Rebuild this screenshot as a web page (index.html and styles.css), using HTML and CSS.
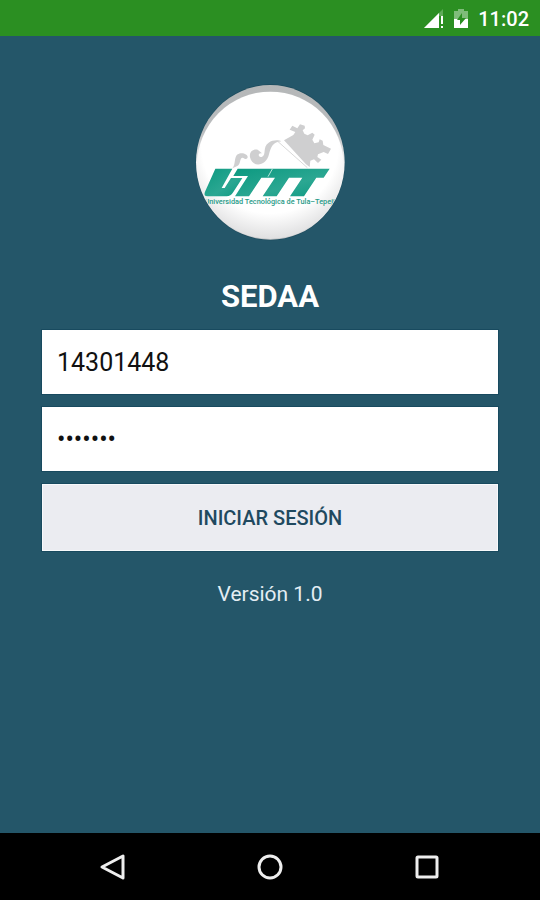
FILE: index.html
```html
<!DOCTYPE html>
<html lang="es">
<head>
<meta charset="utf-8">
<meta name="viewport" content="width=device-width, initial-scale=1">
<title>SEDAA</title>
<link rel="stylesheet" href="styles.css">
</head>
<body>
<header class="status">
  <svg class="status-icon" width="20" height="20" viewBox="0 0 20 20" aria-hidden="true">
    <path d="M0 19 19 0V7H15V19Z" fill="#5fab59"/>
    <path d="M0 19 15 4V19Z" fill="#fff"/>
    <path d="M17 7h2v8h-2zM17 17h2v2h-2z" fill="#fff"/>
  </svg>
  <svg class="status-icon" width="14" height="20" viewBox="0 0 14 20" aria-hidden="true">
    <path d="M4 0h6v2h4v8H0V2h4Z" fill="#7fbc7a"/>
    <path d="M0 10h14v9H0Z" fill="#fff"/>
    <path d="M8 4 3 11h3v5l6-7H8Z" fill="#2b8f22"/>
  </svg>
  <time class="clock">11:02</time>
</header>
<main class="login">
  <svg class="logo" width="150" height="157" viewBox="45 27 450 471" role="img" aria-label="UTTT">
    <defs>
      <linearGradient id="rim" x1="0" y1="0" x2="0" y2="1">
        <stop offset="0" stop-color="#b5b7b8"/>
        <stop offset=".3" stop-color="#b9bcbe"/>
        <stop offset=".5" stop-color="#f4f4f4"/>
        <stop offset=".85" stop-color="#eee"/>
        <stop offset="1" stop-color="#c4c6c8"/>
      </linearGradient>
      <radialGradient id="face" gradientUnits="userSpaceOnUse" cx="270" cy="210" r="285">
        <stop offset=".72" stop-color="#fff"/>
        <stop offset="1" stop-color="#dededf"/>
      </radialGradient>
      <linearGradient id="green" x1="0" y1="0" x2="1" y2="1">
        <stop offset="0" stop-color="#0c9980"/>
        <stop offset=".6" stop-color="#2ba792"/>
        <stop offset="1" stop-color="#0e9a82"/>
      </linearGradient>
      <clipPath id="disc"><ellipse cx="271" cy="262" rx="221" ry="230"/></clipPath>
    </defs>
    <ellipse cx="271" cy="262" rx="224" ry="234" fill="#1c4a5c"/>
    <ellipse cx="271" cy="262" rx="223" ry="232" fill="url(#rim)"/>
    <g clip-path="url(#disc)">
      <ellipse cx="271" cy="271" rx="220" ry="221" fill="url(#face)"/>
      <g fill="#cfcfd0">
        <path d="M312 196 340 180 346 171 329 164 337 152 352 160 360 148 374 152 375 160 368 166 373 176 383 181 397 173 404 179 397 194 403 205 416 202 419 193 428 197 430 210 453 221 444 237 431 231 414 238 412 246 424 254 414 264 402 253 391 257 389 276 378 268Z"/>
        <path d="M157 280C168 269 161 247 173 238C184 230 204 237 203 247C201 256 192 250 188 248C179 247 182 269 172 273Z"/>
        <path d="M210 247C207 229 220 222 233 224L246 235C233 231 233 249 245 246C261 240 246 216 266 203C277 195 295 194 304 199C279 200 272 218 267 238C258 276 216 278 210 247Z"/>
      </g>
      <path d="M292 198 382 278" stroke="#d8d8d8" stroke-width="3" fill="none"/>
      <path d="M106 281H157L125 339H134L153 309H187L160 351Q152 364 140 364H83Q68 364 76 348Z" fill="url(#green)"/>
      <path d="M173 281H449L431 308H409L372 364H330L367 308H327L290 364H248L285 308H244L207 364H165L204 303H160Z" fill="url(#green)"/>
      <path d="M277 282 264 305" stroke="#b8e3db" stroke-width="3"/>
      <text class="logo-text" x="269" y="386" text-anchor="middle">Universidad Tecnológica de Tula–Tepeji</text>
    </g>
  </svg>
  <h1 class="title">SEDAA</h1>
  <form class="form">
    <input class="field" type="text" value="14301448" aria-label="Matrícula">
    <input class="field" type="password" value="1234567" aria-label="Contraseña">
    <button class="submit" type="button">INICIAR SESIÓN</button>
  </form>
  <p class="version">Versión 1.0</p>
</main>
<nav class="navbar">
  <button class="nav-button" type="button" aria-label="Atrás">
    <svg width="28" height="28" viewBox="0 0 28 28"><path d="M3 14 24 3V25Z"/></svg>
  </button>
  <button class="nav-button" type="button" aria-label="Inicio">
    <svg width="28" height="28" viewBox="0 0 28 28"><circle cx="14" cy="14" r="11"/></svg>
  </button>
  <button class="nav-button" type="button" aria-label="Recientes">
    <svg width="28" height="28" viewBox="0 0 28 28"><rect x="4" y="4" width="20" height="20" rx="1"/></svg>
  </button>
</nav>
</body>
</html>
```
FILE: styles.css
```css
* {
  box-sizing: border-box;
}

body {
  margin: 0;
  min-height: 100vh;
  display: flex;
  flex-direction: column;
  background: #245669;
  font-family: Roboto, "Liberation Sans", sans-serif;
}

.status {
  display: flex;
  align-items: center;
  justify-content: flex-end;
  gap: 10px;
  height: 36px;
  padding: 2px 11px 0 0;
  background: #2b8f22;
  color: #fff;
}

.clock {
  font-size: 20px;
  font-weight: 500;
  line-height: 24px;
}

.login {
  flex: 1;
  display: flex;
  flex-direction: column;
  align-items: center;
  padding: 48px 42px 0;
}

.logo {
  display: block;
}

.logo-text {
  fill: #279a87;
  font-size: 22px;
  font-weight: 500;
}

.title {
  margin: 36px 0 13px;
  color: #fff;
  font-size: 31px;
  font-weight: 700;
  line-height: 40px;
}

.form {
  display: flex;
  flex-direction: column;
  gap: 13px;
  width: 100%;
}

.field {
  width: 100%;
  height: 64px;
  padding: 0 15px;
  border: 0;
  border-radius: 0;
  outline: 1px solid #184a5f;
  background: #fff;
  color: #111;
  font-family: inherit;
  font-size: 25px;
}

.submit {
  height: 67px;
  border: 1px solid #f7f9fb;
  outline: 1px solid #184a5f;
  background: #ebecf1;
  color: #20495f;
  font-family: inherit;
  font-size: 20px;
  font-weight: 500;
}

.version {
  margin: 30px 0 0;
  color: #e3edf3;
  font-size: 21px;
  line-height: 26px;
}

.navbar {
  display: flex;
  justify-content: center;
  gap: 129px;
  height: 67px;
  background: #000;
}

.nav-button {
  display: flex;
  align-items: center;
  padding: 0;
  border: 0;
  background: none;
}

.nav-button svg {
  fill: none;
  stroke: #eee;
  stroke-width: 3;
  stroke-linejoin: round;
}
```
